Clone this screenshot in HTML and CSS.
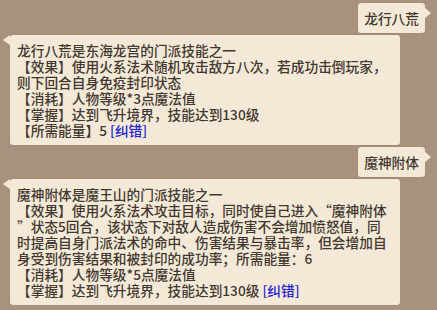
FILE: index.html
```html
<!DOCTYPE html>
<html lang="zh-CN">
<head>
    <meta charset="UTF-8">
    <title>技能查询</title>
    <link rel="stylesheet" href="styles.css">
</head>
<body>
    <div class="chat">
        <div class="row right">
            <div class="bubble ask">龙行八荒</div>
        </div>
        <div class="row left">
            <div class="bubble reply">
                <div>龙行八荒是东海龙宫的门派技能之一</div>
                <div>【效果】使用火系法术随机攻击敌方八次，若成功击倒玩家，</div>
                <div>则下回合自身免疫封印状态</div>
                <div>【消耗】人物等级*3点魔法值</div>
                <div>【掌握】达到飞升境界，技能达到130级</div>
                <div>【所需能量】5 <span class="fix">[纠错]</span></div>
            </div>
        </div>
        <div class="row right">
            <div class="bubble ask">魔神附体</div>
        </div>
        <div class="row left">
            <div class="bubble reply">
                <div>魔神附体是魔王山的门派技能之一</div>
                <div>【效果】使用火系法术攻击目标，同时使自己进入“魔神附体</div>
                <div>”状态5回合，该状态下对敌人造成伤害不会增加愤怒值，同</div>
                <div>时提高自身门派法术的命中、伤害结果与暴击率，但会增加自</div>
                <div>身受到伤害结果和被封印的成功率；所需能量：6</div>
                <div>【消耗】人物等级*5点魔法值</div>
                <div>【掌握】达到飞升境界，技能达到130级 <span class="fix">[纠错]</span></div>
            </div>
        </div>
    </div>
</body>
</html>
```

FILE: styles.css
```css
html, body {
    margin: 0;
    height: 100%;
}
body {
    background: #a8927e;
    font-family: "Noto Sans CJK SC", "Noto Sans", sans-serif;
    font-size: 13.7px;
    font-weight: 500;
    color: #42382f;
    overflow: hidden;
}
.chat {
    display: flex;
    flex-direction: column;
    gap: 2px;
    padding: 3px 12px 0 10px;
}
.row {
    display: flex;
}
.row.right {
    justify-content: flex-end;
}
.bubble {
    position: relative;
    background: #f4e9d7;
    border-radius: 3px;
    box-shadow: 0 0 1px rgba(90, 70, 50, 0.4);
    line-height: 16px;
    white-space: nowrap;
    text-spacing-trim: space-all;
}
.ask {
    padding: 7px 6px;
}
.ask::after {
    content: "";
    position: absolute;
    right: -6px;
    top: 5px;
    border-left: 6px solid #f4e9d7;
    border-top: 5px solid transparent;
    border-bottom: 5px solid transparent;
}
.reply {
    width: 376px;
    padding: 7px;
}
.reply::before {
    content: "";
    position: absolute;
    left: -7px;
    top: 0;
    border-right: 7px solid #f4e9d7;
    border-top: 5px solid transparent;
    border-bottom: 5px solid transparent;
}
.fix {
    color: #2323d0;
}
```
